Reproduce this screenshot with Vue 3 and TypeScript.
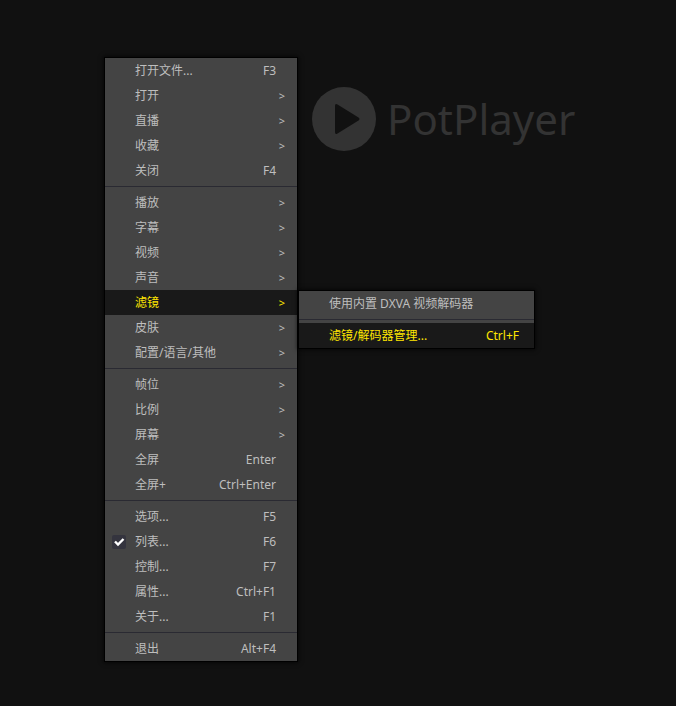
<script setup lang="ts">
interface MenuItem {
  label: string
  shortcut?: string
  checked?: boolean
  arrow?: boolean
  active?: boolean
  children?: MenuItem[][]
}

const groups: MenuItem[][] = [
  [
    { label: '打开文件...', shortcut: 'F3' },
    { label: '打开', arrow: true },
    { label: '直播', arrow: true },
    { label: '收藏', arrow: true },
    { label: '关闭', shortcut: 'F4' },
  ],
  [
    { label: '播放', arrow: true },
    { label: '字幕', arrow: true },
    { label: '视频', arrow: true },
    { label: '声音', arrow: true },
    {
      label: '滤镜',
      arrow: true,
      active: true,
      children: [
        [{ label: '使用内置 DXVA 视频解码器' }],
        [{ label: '滤镜/解码器管理...', shortcut: 'Ctrl+F', active: true }],
      ],
    },
    { label: '皮肤', arrow: true },
    { label: '配置/语言/其他', arrow: true },
  ],
  [
    { label: '帧位', arrow: true },
    { label: '比例', arrow: true },
    { label: '屏幕', arrow: true },
    { label: '全屏', shortcut: 'Enter' },
    { label: '全屏+', shortcut: 'Ctrl+Enter' },
  ],
  [
    { label: '选项...', shortcut: 'F5' },
    { label: '列表...', shortcut: 'F6', checked: true },
    { label: '控制...', shortcut: 'F7' },
    { label: '属性...', shortcut: 'Ctrl+F1' },
    { label: '关于...', shortcut: 'F1' },
  ],
  [{ label: '退出', shortcut: 'Alt+F4' }],
]
</script>

<template>
  <main class="player">
    <div class="brand">
      <svg class="brand-mark" viewBox="0 0 64 64" aria-hidden="true">
        <circle cx="32" cy="32" r="32" fill="#333" />
        <path d="M23 19v26q0 3 2.500 1.500l21-13q2-1.500 0-3l-21-13Q23 16 23 19z" fill="#111" />
      </svg>
      <span class="brand-name">PotPlayer</span>
    </div>

    <nav class="menu menu-main" role="menu">
      <div v-for="(group, g) in groups" :key="g" class="group" role="group">
        <div v-for="item in group" :key="item.label" class="entry">
          <button
            type="button"
            class="item"
            :class="{ active: item.active }"
            :role="item.checked ? 'menuitemcheckbox' : 'menuitem'"
            :aria-checked="item.checked"
            :aria-haspopup="item.arrow ? 'menu' : undefined"
          >
            <span class="gutter">
              <svg v-if="item.checked" class="check" viewBox="0 0 14 14" aria-hidden="true">
                <rect width="14" height="14" rx="2" fill="#34343e" />
                <path d="M3 6.500l3 3 5.500-5.500" fill="none" stroke="#fff" stroke-width="2.400" />
              </svg>
            </span>
            <span class="label">{{ item.label }}</span>
            <span v-if="item.shortcut" class="shortcut">{{ item.shortcut }}</span>
            <span v-if="item.arrow" class="arrow">&gt;</span>
          </button>
          <div v-if="item.children" class="menu menu-sub" role="menu">
            <div v-for="(sub, s) in item.children" :key="s" class="group" role="group">
              <button
                v-for="child in sub"
                :key="child.label"
                type="button"
                class="item"
                :class="{ active: child.active }"
                role="menuitem"
              >
                <span class="gutter"></span>
                <span class="label">{{ child.label }}</span>
                <span v-if="child.shortcut" class="shortcut">{{ child.shortcut }}</span>
              </button>
            </div>
          </div>
        </div>
      </div>
    </nav>
  </main>
</template>

<style>
body {
  margin: 0;
  background: #111;
}
</style>

<style scoped>
.player {
  position: relative;
  box-sizing: border-box;
  min-height: 100vh;
  padding: 87px 0 0 312px;
  background: #111;
  font-family: 'Noto Sans', 'Noto Sans CJK SC', sans-serif;
}

.brand {
  display: flex;
  align-items: center;
  gap: 11px;
  height: 64px;
}

.brand-mark {
  flex: none;
  width: 64px;
  height: 64px;
}

.brand-name {
  color: #333;
  font-size: 42px;
  line-height: 64px;
}

.menu {
  position: absolute;
  background: #444;
  box-shadow: 0 0 0 1px #000, 0 0 4px 2px rgba(0, 0, 0, 0.6);
}

.menu-main {
  top: 58px;
  left: 105px;
  width: 192px;
}

.menu-sub {
  z-index: 1;
  top: 1px;
  left: calc(100% + 2px);
  width: 235px;
}

.group + .group::before {
  content: '';
  display: block;
  height: 1px;
  margin: 3px 0;
  background: #2a2a32;
}

.group {
  display: flow-root;
}

.entry {
  position: relative;
}

.item {
  display: flex;
  align-items: center;
  width: 100%;
  height: 25px;
  margin: 0;
  padding: 0 12px 0 7px;
  border: 0;
  background: transparent;
  color: #bebebe;
  font: inherit;
  font-size: 12px;
  line-height: 24px;
  text-align: left;
  white-space: nowrap;
}

.item.active {
  background: #191919;
  color: #ffe600;
}

.gutter {
  display: flex;
  flex: none;
  width: 23px;
}

.check {
  width: 14px;
  height: 14px;
}

.label {
  flex: 1;
}

.shortcut {
  margin-right: 9px;
}

.arrow {
  font-size: 11px;
  line-height: 26px;
}

.menu-sub .shortcut {
  margin-right: 3px;
}
</style>
